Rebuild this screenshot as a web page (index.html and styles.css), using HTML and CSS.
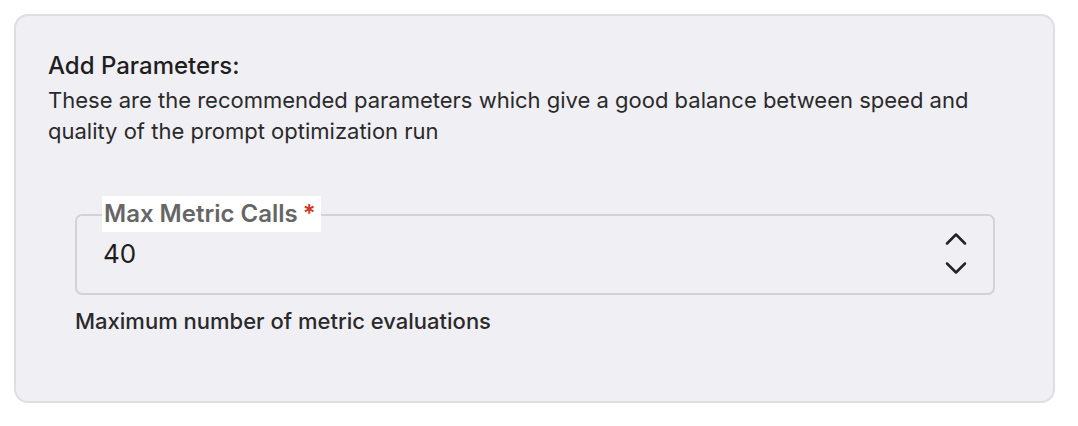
FILE: index.html
```html
<!DOCTYPE html>
<html>
<head>
<meta charset="utf-8">
<link rel="stylesheet" href="styles.css">
</head>
<body>
<div class="card">
  <div class="title">Add Parameters:</div>
  <p class="desc">These are the recommended parameters which give a good balance between speed and quality of the prompt optimization run</p>
  <div class="field">
    <div class="box">
      <label class="label">Max Metric Calls<span class="req">*</span></label>
      <span class="value">40</span>
      <div class="spin">
        <svg width="22" height="14" viewBox="0 0 22 14"><path d="M2 11.5 L11 2.5 L20 11.5" fill="none" stroke="#222" stroke-width="2.5" stroke-linecap="round" stroke-linejoin="round"/></svg>
        <svg width="22" height="14" viewBox="0 0 22 14"><path d="M2 2.5 L11 11.5 L20 2.5" fill="none" stroke="#222" stroke-width="2.5" stroke-linecap="round" stroke-linejoin="round"/></svg>
      </div>
    </div>
    <div class="help">Maximum number of metric evaluations</div>
  </div>
</div>
</body>
</html>
```
FILE: styles.css
```css
html, body { margin: 0; padding: 0; background: #ffffff; }
body { font-family: Inter, "Noto Sans", sans-serif; color: #222; }
.card {
  margin: 14px 23px 0 14px;
  height: 389px;
  box-sizing: border-box;
  background: #f0eff4;
  border: 2px solid #dfdee3;
  border-radius: 14px;
  padding: 35px 32px 0 32px;
}
.title { font-size: 24px; font-weight: 450; line-height: 30px; color: #1e1e1e; }
.desc { margin: 4px 0 0 0; font-size: 22px; line-height: 31px; color: #2a2a2a; max-width: 940px; }
.field { margin: 67px 0 0 27px; width: 920px; }
.box {
  position: relative;
  height: 81px;
  box-sizing: border-box;
  border: 2px solid #d3d2d7;
  border-radius: 7px;
  display: flex;
  align-items: center;
  padding: 0 26px 0 26px;
}
.label {
  position: absolute;
  left: 25px;
  top: -20px;
  height: 36px;
  padding: 0 5px 0 2px;
  background: #ffffff;
  font-size: 24px;
  font-weight: 600;
  color: #666;
  line-height: 36px;
}
.req { color: #d23a2a; margin-left: 5px; }
.value { flex: 1; font-size: 26px; color: #1c1c1c; margin-top: -2px; }
.spin { display: flex; flex-direction: column; gap: 15px; margin-top: -2px; }
.spin svg { display: block; }
.help { margin-top: 13px; font-size: 22px; font-weight: 450; color: #2a2a2a; line-height: 26px; }
```
